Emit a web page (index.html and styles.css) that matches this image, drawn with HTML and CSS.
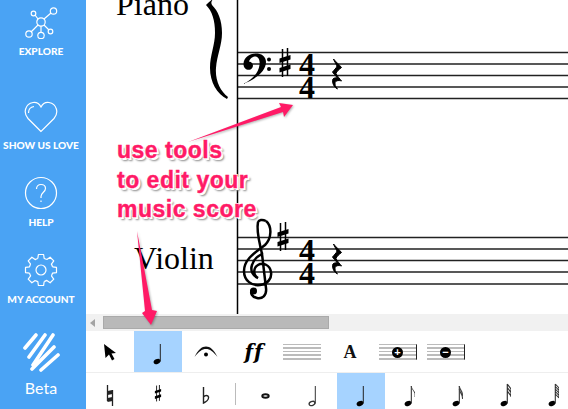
FILE: index.html
```html
<!DOCTYPE html>
<html lang="en">
<head>
    <meta charset="UTF-8">
    <meta name="viewport" content="width=device-width, initial-scale=1.0">
    <title>Score editor</title>
    <link rel="stylesheet" href="styles.css">
</head>
<body>
    <svg class="defs" width="0" height="0">
        <symbol id="sharp" viewBox="0 0 14 30">
            <path d="M4.500 1V29M9.500 0V28" stroke="#000" stroke-width="1.500"/>
            <path d="M1.500 10.500L12.500 7V11.500L1.500 15ZM1.500 20L12.500 16.500V21L1.500 24.500Z" fill="#000"/>
        </symbol>
        <symbol id="rest" viewBox="0 0 12 32">
            <path d="M2.500 1C5 4 8.500 7 10.500 9.500C8 11.500 5.500 13.500 5 15.500C6 18 9 21 10.500 23C7.500 22 3.500 22.500 4 26C4 28 5.500 30 6.500 31C3.500 29.500 1.500 26.500 1.500 22.500C1.500 20 4.500 19.500 6.500 20C4.500 17.500 2 15 1.500 14C3 12 5.500 10 6 8C5 5.500 3 3 2.500 1Z" fill="#000" stroke="#000" stroke-width="1"/>
        </symbol>
        <symbol id="quarter" viewBox="0 0 12 24">
            <ellipse cx="5" cy="18.500" rx="3.500" ry="2.500" fill="#000" transform="rotate(-25 5 18.500)"/>
            <path d="M8.300 18.500V1" stroke="#222" stroke-width="1"/>
        </symbol>
        <path id="gear-tooth" d="M13.800 5.500L14.400 1.500H19.600L20.200 5.500A12 12 0 0 1 22.900 6.600"/>
    </svg>

    <aside class="sidebar">
        <a class="nav-item nav-explore">
            <svg width="34" height="34" viewBox="0 0 34 34" fill="none" stroke="#fff" stroke-width="1.200">
                <circle cx="17" cy="17" r="4.200"/>
                <circle cx="29.500" cy="6" r="3.200"/>
                <circle cx="9.500" cy="8.500" r="2.300"/>
                <circle cx="5" cy="29" r="3.200"/>
                <circle cx="17" cy="30.500" r="3.200"/>
                <circle cx="26.500" cy="26.500" r="2.300"/>
                <path d="M20 14L27 8M14 14L11 10M14 20L7 27M17 21V27M20 20L25 25"/>
            </svg>
            <span>EXPLORE</span>
        </a>
        <a class="nav-item nav-love">
            <svg width="34" height="32" viewBox="0 0 34 32" fill="none" stroke="#fff" stroke-width="1.200">
                <path d="M17 30.500L4 17.500C-1 12 1 3 9 1.500C12.500 1 15.500 3 17 6C18.500 3 21.500 1 25 1.500C33 3 35 12 30 17.500Z"/>
                <path d="M4.500 12C4.500 8.500 6.500 6 10 5.500"/>
            </svg>
            <span>SHOW US LOVE</span>
        </a>
        <a class="nav-item nav-help">
            <svg width="34" height="34" viewBox="0 0 34 34" fill="none" stroke="#fff" stroke-width="1.200">
                <circle cx="17" cy="17" r="15.500"/>
                <path d="M12.500 13C12.500 10 14.500 8.500 17 8.500C20 8.500 21.500 10.500 21.500 12.500C21.500 16 17 16.500 17 20.500V22"/>
                <path d="M17 24.500V26"/>
            </svg>
            <span>HELP</span>
        </a>
        <a class="nav-item nav-account">
            <svg width="34" height="34" viewBox="0 0 34 34" fill="none" stroke="#fff" stroke-width="1.200" stroke-linejoin="round">
                <circle cx="17" cy="17" r="5"/>
                <use href="#gear-tooth"/>
                <use href="#gear-tooth" transform="rotate(45 17 17)"/>
                <use href="#gear-tooth" transform="rotate(90 17 17)"/>
                <use href="#gear-tooth" transform="rotate(135 17 17)"/>
                <use href="#gear-tooth" transform="rotate(180 17 17)"/>
                <use href="#gear-tooth" transform="rotate(225 17 17)"/>
                <use href="#gear-tooth" transform="rotate(270 17 17)"/>
                <use href="#gear-tooth" transform="rotate(315 17 17)"/>
            </svg>
            <span>MY ACCOUNT</span>
        </a>
        <div class="brand">
            <svg width="38" height="40" viewBox="0 0 38 40" stroke="#fff" stroke-width="3.600" stroke-linecap="round">
                <path d="M3 16L14 3M7 25L23 3M11 33L31 3M10 37L32 15M19 38L36 23"/>
            </svg>
            <span>Beta</span>
        </div>
    </aside>

    <main class="editor">
        <div class="score">
            <svg class="score-sheet" width="482" height="314" viewBox="86 0 482 314">
                <g class="staff-lines">
                    <path d="M238 52.500H568M238 64H568M238 75.500H568M238 87H568M238 98.500H568"/>
                    <path d="M238 237.500H568M238 249H568M238 260.500H568M238 272H568M238 284H568"/>
                </g>
                <path d="M237.500 0V314" stroke="#000" stroke-width="1.500"/>
                <text class="part-name" x="116" y="15">Piano</text>
                <text class="part-name" x="134" y="269">Violin</text>
                <path d="M206 5C208 3 210 1 213 -1C211 2 211 3 212 5C218 11 222 20 222 33C222 45 217 55 216 68C215 80 220 91 228 97L227 99C217 94 210 82 210 68C210 55 215 45 215 33C215 20 212 11 206 5Z" fill="#000"/>

                <!-- bass staff -->
                <path d="M243 84C256 79 266 71 266 62C266 56 261 53.500 256 53.500C249 53.500 243.500 58 243.500 64C243.500 68.500 247 70.500 250.500 69.500C254 68 254 62 249 61.500C250 58 254 56 256 56.500C259.500 57.500 260 62 259.500 65C258.500 73 252 80 243 84Z" fill="#000"/>
                <circle cx="269" cy="59.500" r="2"/>
                <circle cx="269" cy="69" r="2"/>
                <use href="#sharp" x="278" y="48" width="14" height="30"/>
                <text class="time-sig"><tspan x="307" y="74.500">4</tspan><tspan x="307" y="98">4</tspan></text>
                <use href="#rest" x="331" y="58" width="12" height="32"/>

                <!-- treble staff -->
                <path d="M266 221C272 226 272 238 265 245C258 251 244 258 244 271C244 281 252 286 260 285C268 284 272 278 271 272C270 265 263 262 258 265C253 268 253 275 258 278C253 276 250 271 252 265C254 258 260 255 262 254L266 288C267 296 262 299 257 298C252 297 250 293 252 290" fill="none" stroke="#000" stroke-width="2.500"/>
                <path d="M258 222C256 232 260 244 262 254M258 222C259 220 262 219 266 221" fill="none" stroke="#000" stroke-width="2.500"/>
                <circle cx="253.500" cy="291" r="3.500"/>
                <use href="#sharp" x="276" y="222" width="14" height="30"/>
                <text class="time-sig"><tspan x="307" y="261">4</tspan><tspan x="307" y="284">4</tspan></text>
                <use href="#rest" x="331" y="243" width="12" height="32"/>
            </svg>
            <div class="note-text">use tools<br>to edit your<br>music score</div>
            <svg class="note-arrows" width="482" height="340" viewBox="86 0 482 340">
                <path d="M188 142L281 107L279 103L293 105L284 117L283 112Z"/>
                <path d="M137 231L145 311L142 313L151 325L157 311L152 310Z"/>
            </svg>
        </div>

        <div class="scrollbar">
            <span class="scroll-left"></span>
            <span class="scroll-thumb"></span>
        </div>

        <div class="toolbar toolbar-main">
            <button class="tool">
                <svg width="14" height="18" viewBox="0 0 14 18"><path d="M1 1L13 10L8.500 10.500L11.500 16L9 17.500L6 11.500L2.500 15Z" fill="#000"/></svg>
            </button>
            <button class="tool tool-on">
                <svg class="note-main" width="12" height="24" viewBox="0 0 12 24"><use href="#quarter"/></svg>
            </button>
            <button class="tool">
                <svg width="24" height="12" viewBox="0 0 24 12">
                    <path d="M.5 11C4 3.500 8 .5 12 .5C16 .5 20 3.500 23.500 11C19 5.500 16 3 12 3C8 3 5 5.500 .5 11Z" fill="#111"/>
                    <circle cx="12" cy="8.500" r="2"/>
                </svg>
            </button>
            <button class="tool tool-ff">ff</button>
            <button class="tool">
                <span class="staff-icon"></span>
            </button>
            <button class="tool tool-text">A</button>
            <button class="tool">
                <span class="staff-icon staff-edit"><b>+</b></span>
            </button>
            <button class="tool">
                <span class="staff-icon staff-edit"><b>&minus;</b></span>
            </button>
        </div>

        <div class="toolbar toolbar-notes">
            <button class="tool">
                <svg width="8" height="21" viewBox="0 0 8 21">
                    <path d="M1.500 0V16M6.500 5V21" stroke="#222" stroke-width="1.300"/>
                    <path d="M1.500 6L6.500 5V9L1.500 10ZM1.500 13L6.500 12V16L1.500 17Z" fill="#222"/>
                </svg>
            </button>
            <button class="tool">
                <svg width="8" height="17" viewBox="0 0 14 30"><use href="#sharp"/></svg>
            </button>
            <button class="tool tool-flat">
                <svg width="8" height="17" viewBox="0 0 8 17" fill="none" stroke="#222">
                    <path d="M1.500 0V16C4 15 7 12.500 6.500 10C6 8 3 8 1.500 10" stroke-width="1.400"/>
                </svg>
            </button>
            <span class="tool-sep"></span>
            <button class="tool tool-whole">
                <svg width="9" height="6" viewBox="0 0 9 6"><ellipse cx="4.500" cy="3" rx="3.200" ry="1.800" fill="none" stroke="#111" stroke-width="2"/></svg>
            </button>
            <button class="tool">
                <svg width="12" height="24" viewBox="0 0 12 24" fill="none" stroke="#333">
                    <ellipse cx="5" cy="18.500" rx="3" ry="2" stroke-width="1.300" transform="rotate(-25 5 18.500)"/>
                    <path d="M8.300 18.500V1"/>
                </svg>
            </button>
            <button class="tool tool-on">
                <svg width="12" height="24" viewBox="0 0 12 24"><use href="#quarter"/></svg>
            </button>
            <button class="tool">
                <svg width="12" height="24" viewBox="0 0 12 24">
                    <use href="#quarter"/>
                    <path d="M8.300 1C8.500 5 13 6 12 12" fill="none" stroke="#444" stroke-width="1"/>
                </svg>
            </button>
            <button class="tool">
                <svg width="12" height="24" viewBox="0 0 12 24">
                    <use href="#quarter"/>
                    <path d="M8.300 1C8.500 5 12 6 11.500 11M8.300 4C8.500 8 12 9 11.500 14" fill="none" stroke="#444" stroke-width="1.100"/>
                </svg>
            </button>
            <button class="tool tool-tall">
                <svg width="12" height="26" viewBox="0 0 12 26">
                    <ellipse cx="5" cy="20.500" rx="3.500" ry="2.500" fill="#000" transform="rotate(-25 5 20.500)"/>
                    <path d="M8.300 20.500V1M8.300 1L12 6M8.300 4.500L12 9.500M8.300 8L12 13M12 6V14" stroke="#333" stroke-width="1.200" fill="none"/>
                </svg>
            </button>
            <button class="tool tool-tall">
                <svg width="12" height="26" viewBox="0 0 12 26">
                    <ellipse cx="5" cy="20.500" rx="3.500" ry="2.500" fill="#000" transform="rotate(-25 5 20.500)"/>
                    <path d="M8.300 20.500V1M8.300 1L12 5M8.300 3.500L12 7.500M8.300 6L12 10M8.300 8.500L12 12.500M8.300 11L12 15M12 5V15" stroke="#333" stroke-width="1.100" fill="none"/>
                </svg>
            </button>
        </div>
    </main>
</body>
</html>
```

FILE: styles.css
```css
* {
    box-sizing: border-box;
}

body {
    margin: 0;
    width: 568px;
    height: 409px;
    display: flex;
    overflow: hidden;
    background: #fff;
    font-family: "Liberation Sans", Arial, sans-serif;
}

.defs {
    position: absolute;
}

/* ----- Sidebar ----- */
.sidebar {
    width: 86px;
    height: 409px;
    flex: none;
    background: #4aa3f4;
    color: #fff;
    display: flex;
    flex-direction: column;
    align-items: center;
    padding: 5px 4px 0 0;
}

.nav-item {
    display: flex;
    flex-direction: column;
    align-items: center;
    gap: 6px;
    font-family: Lato, sans-serif;
    font-size: 10.100px;
    font-weight: 900;
    line-height: 12px;
    white-space: nowrap;
}

.nav-love {
    margin-top: 44px;
}

.nav-help,
.nav-account {
    margin-top: 25px;
}

.brand {
    margin-top: 27px;
    display: flex;
    flex-direction: column;
    align-items: center;
    gap: 7px;
    font-family: Lato, sans-serif;
    font-weight: 400;
    font-size: 16px;
    line-height: 18px;
}

/* ----- Score ----- */
.editor {
    flex: 1;
    min-width: 0;
    display: flex;
    flex-direction: column;
}

.score {
    height: 314px;
    flex: none;
    position: relative;
    z-index: 1;
}

.score-sheet,
.note-arrows {
    position: absolute;
    left: 0;
    top: 0;
}

.score-sheet circle {
    fill: #000;
}

.staff-lines path {
    fill: none;
    stroke: #222;
    stroke-width: 1.500;
}

.part-name {
    font-family: "Liberation Serif", serif;
    font-size: 32px;
    fill: #000;
}

.time-sig {
    font-family: "Liberation Serif", serif;
    font-size: 32px;
    font-weight: 700;
    text-anchor: middle;
    fill: #000;
}

.note-text {
    position: absolute;
    left: 31px;
    top: 136px;
    font-size: 23px;
    font-weight: 700;
    line-height: 29.500px;
    letter-spacing: 0.500px;
    white-space: nowrap;
    color: #ff1a66;
    -webkit-text-stroke: 0.400px #ff1a66;
    text-shadow: 1px 1px 0 #fff, -1px -1px 0 #fff, 1px -1px 0 #fff, -1px 1px 0 #fff, 2px 2px 0 #fff, 3px 3px 2px #888;
}

.note-arrows path {
    fill: #ff1a66;
    filter: drop-shadow(1px 1px 1px rgba(0, 0, 0, 0.3));
}

/* ----- Scrollbar ----- */
.scrollbar {
    height: 17px;
    flex: none;
    background: #f1f1f1;
    display: flex;
    align-items: center;
    padding-left: 4px;
}

.scroll-left {
    width: 0;
    height: 0;
    border: 4px solid transparent;
    border-left: 0;
    border-right: 5px solid #a3a3a3;
}

.scroll-thumb {
    width: 226px;
    height: 13px;
    margin-left: 8px;
    background: #b9b9b9;
    border: 1px solid #aaa;
}

/* ----- Toolbars ----- */
.toolbar {
    display: flex;
    background: #fff;
}

.toolbar-main {
    height: 42px;
    flex: none;
    border-bottom: 1px solid #eee;
}

.toolbar-notes {
    flex: 1;
}

.tool {
    width: 48px;
    flex: none;
    padding: 0;
    border: 0;
    background: none;
    display: flex;
    align-items: center;
    justify-content: center;
}

.tool-on {
    background: #a6d3ff;
}

.toolbar-main .tool {
    padding-top: 1px;
}

.toolbar-main .note-main {
    margin-top: 5px;
}

.toolbar-notes .tool {
    align-items: flex-start;
    padding-top: 12px;
}

.toolbar-notes .tool-flat {
    padding-top: 14px;
}

.toolbar-notes .tool-whole {
    padding-top: 20px;
}

.toolbar-notes .tool-tall {
    padding-top: 10px;
}

.tool-ff {
    font-family: "DejaVu Serif", serif;
    font-style: italic;
    font-weight: 700;
    font-size: 20px;
    letter-spacing: 1px;
    color: #000;
}

.tool-text {
    font-family: "Liberation Serif", serif;
    font-weight: 700;
    font-size: 18px;
    color: #111;
}

.tool-sep {
    width: 1px;
    height: 22px;
    margin: 10px 5px 0;
    flex: none;
    background: #bbb;
}

.staff-icon {
    width: 38px;
    height: 16px;
    display: flex;
    align-items: center;
    justify-content: center;
    border-top: 1px solid #bbb;
    border-bottom: 1px solid #bbb;
    background: repeating-linear-gradient(#fff 0, #fff 2px, #bbb 2px, #bbb 3.500px);
}

.staff-edit {
    border-right: 1px solid #222;
}

.staff-edit b {
    width: 11px;
    height: 11px;
    border-radius: 50%;
    background: #000;
    color: #fff;
    font-size: 11px;
    line-height: 11px;
    text-align: center;
}
```
